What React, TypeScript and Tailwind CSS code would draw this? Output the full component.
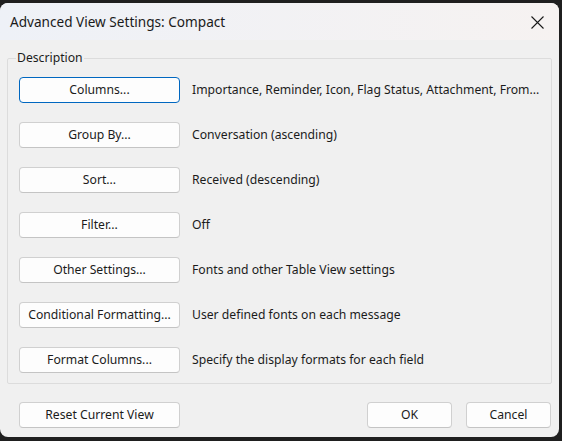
import React from "react";

const font = { fontFamily: '"Noto Sans", "Segoe UI", sans-serif' };

function Btn({ label, primary, className = "" }: { label: string; primary?: boolean; className?: string }) {
  return (
    <div
      className={`h-[26px] flex items-center justify-center rounded-[4px] bg-[#fdfdfd] text-[12.2px] text-[#1b1b1b] ${
        primary ? "border border-[#0067c0]" : "border border-[#d0d0d0] border-b-[#c4c4c4]"
      } ${className}`}
    >
      {label}
    </div>
  );
}

const rows = [
  ["Columns...", "Importance, Reminder, Icon, Flag Status, Attachment, From..."],
  ["Group By...", "Conversation (ascending)"],
  ["Sort...", "Received (descending)"],
  ["Filter...", "Off"],
  ["Other Settings...", "Fonts and other Table View settings"],
  ["Conditional Formatting...", "User defined fonts on each message"],
  ["Format Columns...", "Specify the display formats for each field"],
];

export default function App() {
  return (
    <div className="w-[562px] h-[441px] bg-[#1f1f1f] pt-[3px] pr-[3px] pb-[4px] overflow-hidden" style={font}>
      <div className="h-[434px] w-[559px] rounded-[8px] overflow-hidden bg-[#f0f0f0] flex flex-col">
        <div className="h-[37px] shrink-0 flex items-center justify-between pl-[10px] pr-[15px] bg-gradient-to-r from-[#eef1f7] to-[#f6f2f1]">
          <span className="text-[13.6px] text-[#1a1a1a] leading-none">Advanced View Settings: Compact</span>
          <svg width="13" height="13" viewBox="0 0 13 13" className="mt-[1px]">
            <path d="M0.5 0.5 L12.5 12.5 M12.5 0.5 L0.5 12.5" stroke="#1a1a1a" strokeWidth="1.1" fill="none" />
          </svg>
        </div>
        <div className="relative shrink-0 mx-[7px] mt-[18px] h-[326px] border border-[#dcdcdc] rounded-[2px]">
          <span className="absolute left-[8px] -top-[9px] px-[1px] bg-[#f0f0f0] text-[12.2px] leading-[16px] text-[#1b1b1b]">
            Description
          </span>
          <div className="flex flex-col gap-[19px] pt-[18px] pl-[11px]">
            {rows.map(([b, d], i) => (
              <div key={b} className="flex items-center">
                <Btn label={b} primary={i === 0} className="w-[161px]" />
                <span className="ml-[12px] text-[12.2px] text-[#1b1b1b] whitespace-nowrap">{d}</span>
              </div>
            ))}
          </div>
        </div>
        <div className="flex items-center mt-[18px] pl-[19px] pr-[8px]">
          <Btn label="Reset Current View" className="w-[161px]" />
          <div className="flex-1" />
          <Btn label="OK" className="w-[85px]" />
          <Btn label="Cancel" className="w-[85px] ml-[14px]" />
        </div>
      </div>
    </div>
  );
}
